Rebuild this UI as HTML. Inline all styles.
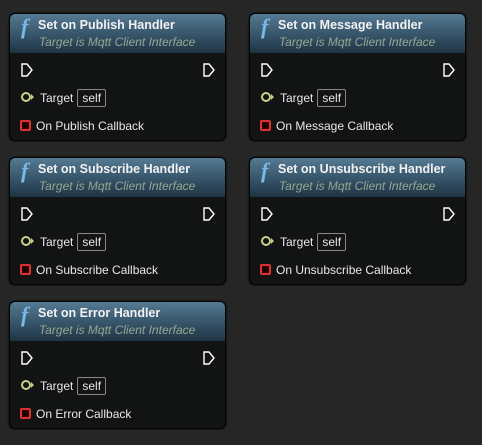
<!DOCTYPE html><html><head><style>
body{margin:0;width:482px;height:445px;background:#262626;font-family:"Liberation Sans",sans-serif;position:relative;overflow:hidden}
.n{position:absolute;width:215px;height:126px;background:#121313;border:1px solid #050505;border-radius:6px;box-shadow:0 0 2px #000;overflow:hidden}
.h{height:39px;background:linear-gradient(180deg,#557a93 0%,#3b5a70 45%,#1f3444 100%);position:relative}
.f{position:absolute;left:11px;top:0px;font-family:"Liberation Serif",serif;font-style:italic;font-weight:bold;font-size:22px;color:#7ab8ea}
.t{position:absolute;left:28px;top:4px;font-size:12.5px;font-weight:bold;color:#f2f2f2;white-space:nowrap}
.s{position:absolute;left:29px;top:21px;font-size:12px;font-style:italic;color:#98a690;white-space:nowrap}
.e{position:absolute;top:48px}
.r{position:absolute;left:10px;font-size:12px;color:#e8e8e8;white-space:nowrap}
.self{display:inline-block;border:1px solid #888;padding:0 4px;border-radius:2px;margin-left:4px;line-height:16px}
.sq{display:inline-block;width:7px;height:7px;border:2px solid #e03030;background:#200;border-radius:2px;vertical-align:-1px;margin-right:5px}
</style></head><body>

<div class="n" style="left:9px;top:13px"><div class="h"><span class="f">f</span><span class="t">Set on Publish Handler</span><span class="s">Target is Mqtt Client Interface</span></div>
<svg class="e" style="left:10px" width="14" height="16"><path d="M2 2h5l5 6-5 6H2z" fill="none" stroke="#fff" stroke-width="1.4"/></svg>
<svg class="e" style="left:192px" width="14" height="16"><path d="M2 2h5l5 6-5 6H2z" fill="none" stroke="#fff" stroke-width="1.4"/></svg>
<div class="r" style="top:75px"><svg width="20" height="12" style="vertical-align:-1px"><circle cx="6" cy="6" r="4" fill="none" stroke="#c8d08a" stroke-width="2"/><path d="M11 3l3 3-3 3z" fill="#c8d08a"/></svg>Target<span class="self">self</span></div>
<div class="r" style="top:105px"><span class="sq"></span>On Publish Callback</div></div>

<div class="n" style="left:249px;top:13px"><div class="h"><span class="f">f</span><span class="t">Set on Message Handler</span><span class="s">Target is Mqtt Client Interface</span></div>
<svg class="e" style="left:10px" width="14" height="16"><path d="M2 2h5l5 6-5 6H2z" fill="none" stroke="#fff" stroke-width="1.4"/></svg>
<svg class="e" style="left:192px" width="14" height="16"><path d="M2 2h5l5 6-5 6H2z" fill="none" stroke="#fff" stroke-width="1.4"/></svg>
<div class="r" style="top:75px"><svg width="20" height="12" style="vertical-align:-1px"><circle cx="6" cy="6" r="4" fill="none" stroke="#c8d08a" stroke-width="2"/><path d="M11 3l3 3-3 3z" fill="#c8d08a"/></svg>Target<span class="self">self</span></div>
<div class="r" style="top:105px"><span class="sq"></span>On Message Callback</div></div>

<div class="n" style="left:9px;top:157px"><div class="h"><span class="f">f</span><span class="t">Set on Subscribe Handler</span><span class="s">Target is Mqtt Client Interface</span></div>
<svg class="e" style="left:10px" width="14" height="16"><path d="M2 2h5l5 6-5 6H2z" fill="none" stroke="#fff" stroke-width="1.4"/></svg>
<svg class="e" style="left:192px" width="14" height="16"><path d="M2 2h5l5 6-5 6H2z" fill="none" stroke="#fff" stroke-width="1.4"/></svg>
<div class="r" style="top:75px"><svg width="20" height="12" style="vertical-align:-1px"><circle cx="6" cy="6" r="4" fill="none" stroke="#c8d08a" stroke-width="2"/><path d="M11 3l3 3-3 3z" fill="#c8d08a"/></svg>Target<span class="self">self</span></div>
<div class="r" style="top:105px"><span class="sq"></span>On Subscribe Callback</div></div>

<div class="n" style="left:249px;top:157px"><div class="h"><span class="f">f</span><span class="t">Set on Unsubscribe Handler</span><span class="s">Target is Mqtt Client Interface</span></div>
<svg class="e" style="left:10px" width="14" height="16"><path d="M2 2h5l5 6-5 6H2z" fill="none" stroke="#fff" stroke-width="1.4"/></svg>
<svg class="e" style="left:192px" width="14" height="16"><path d="M2 2h5l5 6-5 6H2z" fill="none" stroke="#fff" stroke-width="1.4"/></svg>
<div class="r" style="top:75px"><svg width="20" height="12" style="vertical-align:-1px"><circle cx="6" cy="6" r="4" fill="none" stroke="#c8d08a" stroke-width="2"/><path d="M11 3l3 3-3 3z" fill="#c8d08a"/></svg>Target<span class="self">self</span></div>
<div class="r" style="top:105px"><span class="sq"></span>On Unsubscribe Callback</div></div>

<div class="n" style="left:9px;top:301px"><div class="h"><span class="f">f</span><span class="t">Set on Error Handler</span><span class="s">Target is Mqtt Client Interface</span></div>
<svg class="e" style="left:10px" width="14" height="16"><path d="M2 2h5l5 6-5 6H2z" fill="none" stroke="#fff" stroke-width="1.4"/></svg>
<svg class="e" style="left:192px" width="14" height="16"><path d="M2 2h5l5 6-5 6H2z" fill="none" stroke="#fff" stroke-width="1.4"/></svg>
<div class="r" style="top:75px"><svg width="20" height="12" style="vertical-align:-1px"><circle cx="6" cy="6" r="4" fill="none" stroke="#c8d08a" stroke-width="2"/><path d="M11 3l3 3-3 3z" fill="#c8d08a"/></svg>Target<span class="self">self</span></div>
<div class="r" style="top:105px"><span class="sq"></span>On Error Callback</div></div>

</body></html>
